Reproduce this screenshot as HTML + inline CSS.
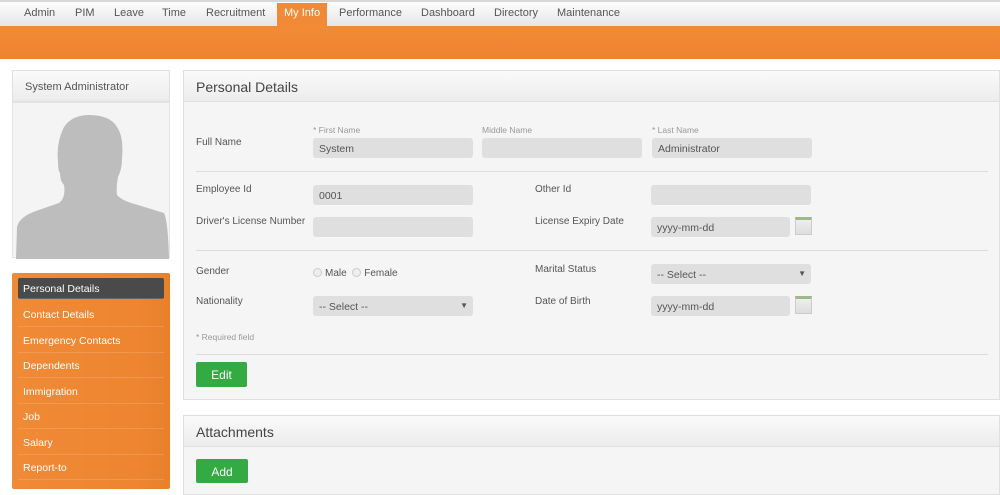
<!DOCTYPE html>
<html><head><meta charset="utf-8"><style>
*{margin:0;padding:0;box-sizing:border-box}
body{width:1000px;height:489px;overflow:hidden;background:#fff;font-family:"Liberation Sans",sans-serif;font-size:11px;color:#444;position:relative}
.a{position:absolute}
.nav{left:0;top:0;width:1000px;height:26px;background:linear-gradient(#fdfdfd,#e6e6e6);border-top:2px solid #d8d8d8}
.nav span{position:absolute;top:5px;font-size:11px;color:#555}
.orange{left:0;top:26px;width:1000px;height:33px;background:linear-gradient(#f28b35,#ee8230);}
.tab{left:277px;top:1px;width:50px;height:25px;background:#f08a36}
.hd{background:linear-gradient(#fafafa,#ececec);border:1px solid #e0e0e0}
.inp{position:absolute;height:20px;background:#dfdfdf;border-radius:3px;font-size:10.5px;color:#555;padding:5px 6px}
.lab{position:absolute;font-size:10px;color:#555}
.sm{position:absolute;font-size:8.5px;color:#999}
.line{position:absolute;left:196px;width:792px;height:1px;background:#ddd}
.menu div{position:absolute;font-size:10.5px;color:#fff;width:146px;height:25px;border-bottom:1px solid rgba(255,255,255,.15);padding-top:7px;left:6px;padding-left:5px}
.btn{position:absolute;background:#33aa42;color:#fff;font-size:12px;text-align:center;border-radius:2px;padding-top:6px}
.cal{position:absolute;width:17px;height:18px;border:1px solid #ccc;background:linear-gradient(#eee,#ddd);border-top:3px solid #9db88a}
.rad{display:inline-block;width:9px;height:9px;border:1px solid #ccc;border-radius:50%;background:#eee;vertical-align:-1px;margin-right:3px}
</style></head><body>
<div class="a nav">
<div class="a tab"></div>
<span style="left:24px">Admin</span><span style="left:75px">PIM</span><span style="left:114px">Leave</span><span style="left:162px">Time</span><span style="left:206px">Recruitment</span><span style="left:284px;color:#fff">My Info</span><span style="left:339px">Performance</span><span style="left:421px">Dashboard</span><span style="left:494px">Directory</span><span style="left:557px">Maintenance</span>
</div>
<div class="a orange"></div>

<div class="a hd" style="left:12px;top:70px;width:158px;height:32px;padding:10px 12px;font-size:11px;color:#555">System Administrator</div>
<div class="a" style="left:12px;top:102px;width:158px;height:156px;background:#f4f4f4;border:1px solid #e4e4e4">
<svg width="156" height="156" style="position:absolute;left:1px;top:0"><path d="M2 156 L3 124 Q5 114 22 108 L45 100 Q52 95 50 82 Q46 78 46 70 Q44 68 44 58 Q42 40 50 24 Q58 12 75 12 Q96 12 103 24 Q110 34 108 56 Q108 66 104 74 Q102 84 103 92 Q108 98 124 102 L150 110 Q154 118 155 156 Z" fill="#bdbdbd"/></svg>
</div>

<div class="a menu" style="left:12px;top:273px;width:158px;height:216px;background:linear-gradient(90deg,#f08a36,#ee8530 80%,#e8802c);border-radius:2px">
<div style="top:5px;background:#4a4a4a;border-radius:2px;height:21px;padding-top:5px">Personal Details</div>
<div style="top:29px">Contact Details</div>
<div style="top:55px">Emergency Contacts</div>
<div style="top:80px">Dependents</div>
<div style="top:106px">Immigration</div>
<div style="top:131px">Job</div>
<div style="top:157px">Salary</div>
<div style="top:182px">Report-to</div>
</div>

<div class="a" style="left:183px;top:70px;width:817px;height:330px;background:#f5f5f5;border:1px solid #e0e0e0"></div>
<div class="a hd" style="left:183px;top:70px;width:817px;height:32px;padding:8px 12px;font-size:14px;color:#444">Personal Details</div>

<div class="lab" style="left:196px;top:137px">Full Name</div>
<div class="sm" style="left:313px;top:125px">* First Name</div>
<div class="sm" style="left:482px;top:125px">Middle Name</div>
<div class="sm" style="left:652px;top:125px">* Last Name</div>
<div class="inp" style="left:313px;top:138px;width:160px">System</div>
<div class="inp" style="left:482px;top:138px;width:160px"></div>
<div class="inp" style="left:652px;top:138px;width:160px">Administrator</div>
<div class="line" style="top:171px"></div>

<div class="lab" style="left:196px;top:184px">Employee Id</div>
<div class="inp" style="left:313px;top:185px;width:160px">0001</div>
<div class="lab" style="left:535px;top:184px">Other Id</div>
<div class="inp" style="left:651px;top:185px;width:160px"></div>
<div class="lab" style="left:196px;top:216px">Driver's License Number</div>
<div class="inp" style="left:313px;top:217px;width:160px"></div>
<div class="lab" style="left:535px;top:216px">License Expiry Date</div>
<div class="inp" style="left:651px;top:217px;width:139px">yyyy-mm-dd</div>
<div class="cal" style="left:795px;top:217px"></div>
<div class="line" style="top:250px"></div>

<div class="lab" style="left:196px;top:266px">Gender</div>
<div class="lab" style="left:313px;top:268px"><span class="rad"></span>Male &nbsp;<span class="rad"></span>Female</div>
<div class="lab" style="left:535px;top:264px">Marital Status</div>
<div class="inp" style="left:651px;top:264px;width:160px">-- Select --<span style="position:absolute;right:5px;top:5px;font-size:8px">▼</span></div>
<div class="lab" style="left:196px;top:296px">Nationality</div>
<div class="inp" style="left:313px;top:296px;width:160px">-- Select --<span style="position:absolute;right:5px;top:5px;font-size:8px">▼</span></div>
<div class="lab" style="left:535px;top:296px">Date of Birth</div>
<div class="inp" style="left:651px;top:296px;width:139px">yyyy-mm-dd</div>
<div class="cal" style="left:795px;top:296px"></div>
<div class="sm" style="left:196px;top:332px">* Required field</div>
<div class="line" style="top:354px"></div>
<div class="btn" style="left:196px;top:362px;width:51px;height:25px">Edit</div>

<div class="a" style="left:183px;top:415px;width:817px;height:80px;background:#f5f5f5;border:1px solid #e0e0e0"></div>
<div class="a hd" style="left:183px;top:415px;width:817px;height:32px;padding:8px 12px;font-size:14px;color:#444">Attachments</div>
<div class="btn" style="left:196px;top:459px;width:52px;height:24px">Add</div>
</body></html>
